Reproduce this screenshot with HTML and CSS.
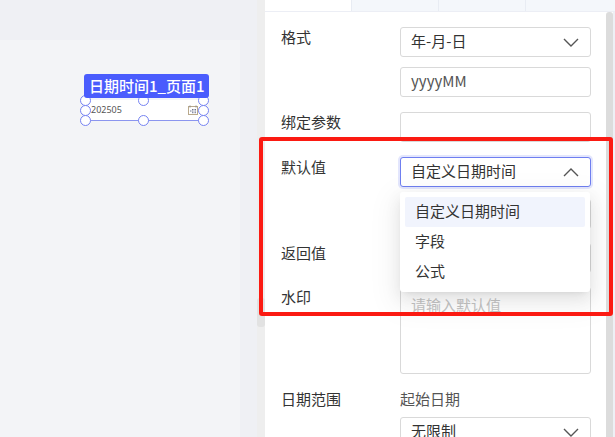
FILE: index.html
```html
<!DOCTYPE html>
<html lang="zh">
<head>
<meta charset="utf-8">
<title>日期时间</title>
<link rel="stylesheet" href="styles.css">
</head>
<body>
<div class="app">
  <main class="stage">
    <div class="canvas">
      <div class="widget">
        <div class="widget-box">
          <span class="widget-value">202505</span>
          <svg class="widget-icon" width="10" height="10" viewBox="0 0 10 10">
            <rect x="0.5" y="1.5" width="9" height="8" fill="#fff" stroke="#b9a98c"/>
            <path d="M2 0.5v2M8 0.5v2" stroke="#8a8a8a"/>
            <path d="M4 4.5h1.5M6.5 4.5h1.5M2 6h1.5M4 6h1.5M6.5 6h1.5M4 7.7h1.5M6.5 7.7h1.5" stroke="#6f7690"/>
          </svg>
        </div>
        <span class="handle h-tl"></span>
        <span class="handle h-tm"></span>
        <span class="handle h-tr"></span>
        <span class="handle h-ml"></span>
        <span class="handle h-mr"></span>
        <span class="handle h-bl"></span>
        <span class="handle h-bm"></span>
        <span class="handle h-br"></span>
        <div class="widget-tag">日期时间1_页面1</div>
      </div>
    </div>
    <div class="stage-bar"><div class="stage-thumb"></div></div>
  </main>
  <aside class="panel">
    <div class="tabs">
      <span class="tab tab-active"></span>
      <span class="tab"></span>
      <span class="tab"></span>
      <span class="tab tab-last"></span>
    </div>
    <div class="form">
      <div class="row row-format">
        <label class="label">格式</label>
        <div class="control select"><span>年-月-日</span>
          <svg class="chev" width="16" height="9" viewBox="0 0 16 9"><path d="M1 1l7 7 7-7" fill="none" stroke="#555" stroke-width="1.4"/></svg>
        </div>
      </div>
      <div class="row row-pattern">
        <span class="label"></span>
        <div class="control"><span class="value-soft">yyyyMM</span></div>
      </div>
      <div class="row row-bind">
        <label class="label">绑定参数</label>
        <div class="control"></div>
      </div>
      <div class="row row-default">
        <label class="label">默认值</label>
        <div class="control select is-open"><span>自定义日期时间</span>
          <svg class="chev" width="16" height="9" viewBox="0 0 16 9"><path d="M1 8l7-7 7 7" fill="none" stroke="#555" stroke-width="1.4"/></svg>
        </div>
      </div>
      <div class="row row-custom">
        <span class="label"></span>
        <div class="control"></div>
      </div>
      <div class="row row-return">
        <label class="label">返回值</label>
        <div class="control"></div>
      </div>
      <div class="row row-watermark">
        <label class="label">水印</label>
        <div class="control textarea"><span class="placeholder">请输入默认值</span></div>
      </div>
      <div class="row row-range">
        <label class="label">日期范围</label>
        <div class="range-col">
          <div class="range-title">起始日期</div>
          <div class="control select"><span>无限制</span>
            <svg class="chev" width="16" height="9" viewBox="0 0 16 9"><path d="M1 1l7 7 7-7" fill="none" stroke="#555" stroke-width="1.4"/></svg>
          </div>
        </div>
      </div>
    </div>
    <ul class="menu">
      <li class="menu-item menu-item-on">自定义日期时间</li>
      <li class="menu-item">字段</li>
      <li class="menu-item">公式</li>
    </ul>
    <div class="scroll-track"><div class="scroll-thumb"></div></div>
  </aside>
  <div class="red-frame"></div>
</div>
</body>
</html>
```
FILE: styles.css
```css
* { box-sizing: border-box; }
html, body { margin: 0; padding: 0; }
body {
  width: 615px;
  height: 437px;
  overflow: hidden;
  font-family: "Noto Sans CJK SC", "Noto Sans", sans-serif;
  font-size: 15px;
  color: #333;
  background: #eff0f4;
}
.app { position: relative; display: flex; width: 615px; height: 437px; overflow: hidden; }
.stage { position: relative; flex: 0 0 265px; padding-top: 40px; background: #eff0f4; }
.canvas { position: relative; width: 240px; height: 397px; background: #f3f4f7; }
.stage-bar { position: absolute; top: 0; right: 0; bottom: 0; width: 8px; background: #eeeeee; }
.stage-thumb { position: absolute; top: 298px; left: 0; width: 8px; height: 29px; background: #e2e2e2; border-radius: 3px; }

.widget { position: absolute; left: 85px; top: 60px; width: 118px; height: 21px; }
.widget-box {
  position: absolute; left: 0; right: 0; bottom: 0; height: 21px;
  display: flex; align-items: center; justify-content: space-between;
  padding: 0 5px 0 6px;
  background: #fff;
  border-bottom: 1px solid #8b95ef;
}
.widget-value { font-family: "Noto Sans", sans-serif; font-size: 9px; color: #555; line-height: 12px; }
.widget-icon { display: block; }
.handle {
  position: absolute; width: 11px; height: 11px; border-radius: 50%;
  background: #fff; border: 1.5px solid #7683f2;
}
.h-tl { left: -5px; top: -5px; }
.h-tm { left: 53px; top: -5px; }
.h-tr { left: 113px; top: -5px; }
.h-ml { left: -5px; top: 5px; }
.h-mr { left: 113px; top: 5px; }
.h-bl { left: -5px; top: 15px; }
.h-bm { left: 53px; top: 15px; }
.h-br { left: 113px; top: 15px; }
.widget-tag {
  position: absolute; left: -1px; top: -26px; width: 125px; height: 24px;
  padding-left: 5px;
  background: #4a5cfd; color: #fff; border-radius: 3px;
  font-size: 15px; font-weight: 500; line-height: 24px;
  white-space: nowrap;
}

.panel { position: relative; flex: 1; background: #fff; }
.tabs { display: flex; height: 12px; background: #f4f7fb; border-bottom: 1px solid #eceef5; }
.tab { width: 87px; border-right: 1px solid #e8ecf3; }
.tab-active { width: 87px; background: #fff; }
.tab-last { flex: 1; border-right: 0; }

.form { padding: 15px 24px 0 16px; }
.row { display: flex; align-items: flex-start; }
.label { flex: 0 0 119px; line-height: 20px; color: #333; }
.control {
  flex: 1; display: flex; align-items: center; justify-content: space-between;
  height: 30px; padding: 0 11px 2px 10px;
  background: #fff; border: 1px solid #d9d9d9; border-radius: 3px;
  line-height: 20px;
}
.row-pattern { margin-top: 10px; }
.row-bind { margin-top: 15px; }
.row-default { margin-top: 15px; }
.row-custom { margin-top: 12px; }
.row-return { margin-top: 14px; }
.row-watermark { margin-top: 14px; }
.row-range { margin-top: 15px; }
.value-soft { color: #555; }
.chev { display: block; margin-top: 2px; }
.select.is-open { border-color: #6f7ff0; box-shadow: 0 0 0 2px #e3e6fd; }
.textarea { height: 87px; align-items: flex-start; padding-top: 7px; }
.placeholder { color: #c4c4c4; }
.range-col { flex: 1; display: flex; flex-direction: column; min-width: 0; }
.range-title { line-height: 20px; color: #555; margin-bottom: 8px; }
.range-col .control { flex: 0 0 30px; }

.menu {
  position: absolute; left: 135px; top: 192px; width: 190px; height: 100px;
  margin: 0; padding: 5px; list-style: none;
  background: #fff; border-radius: 3px;
  box-shadow: 0 9px 28px 8px rgba(0, 0, 0, 0.05), 0 6px 16px rgba(0, 0, 0, 0.08), 0 3px 6px -4px rgba(0, 0, 0, 0.12);
}
.menu-item { height: 30px; padding: 0 11px 2px 10px; line-height: 28px; color: #333; border-radius: 2px; }
.menu-item-on { background: #f1f4fd; }
.scroll-track { position: absolute; right: 0; top: 12px; bottom: 0; width: 9px; padding-right: 2px; background: #fff; border-right: 2px solid #eef0f5; }
.scroll-thumb { width: 7px; height: 100%; background: #dcdcdc; border-radius: 3px 3px 0 0; }

.red-frame {
  position: absolute; left: 259px; top: 137px; width: 354px; height: 179px;
  border: 4px solid #fb1a12; border-radius: 3px; pointer-events: none;
}
```
